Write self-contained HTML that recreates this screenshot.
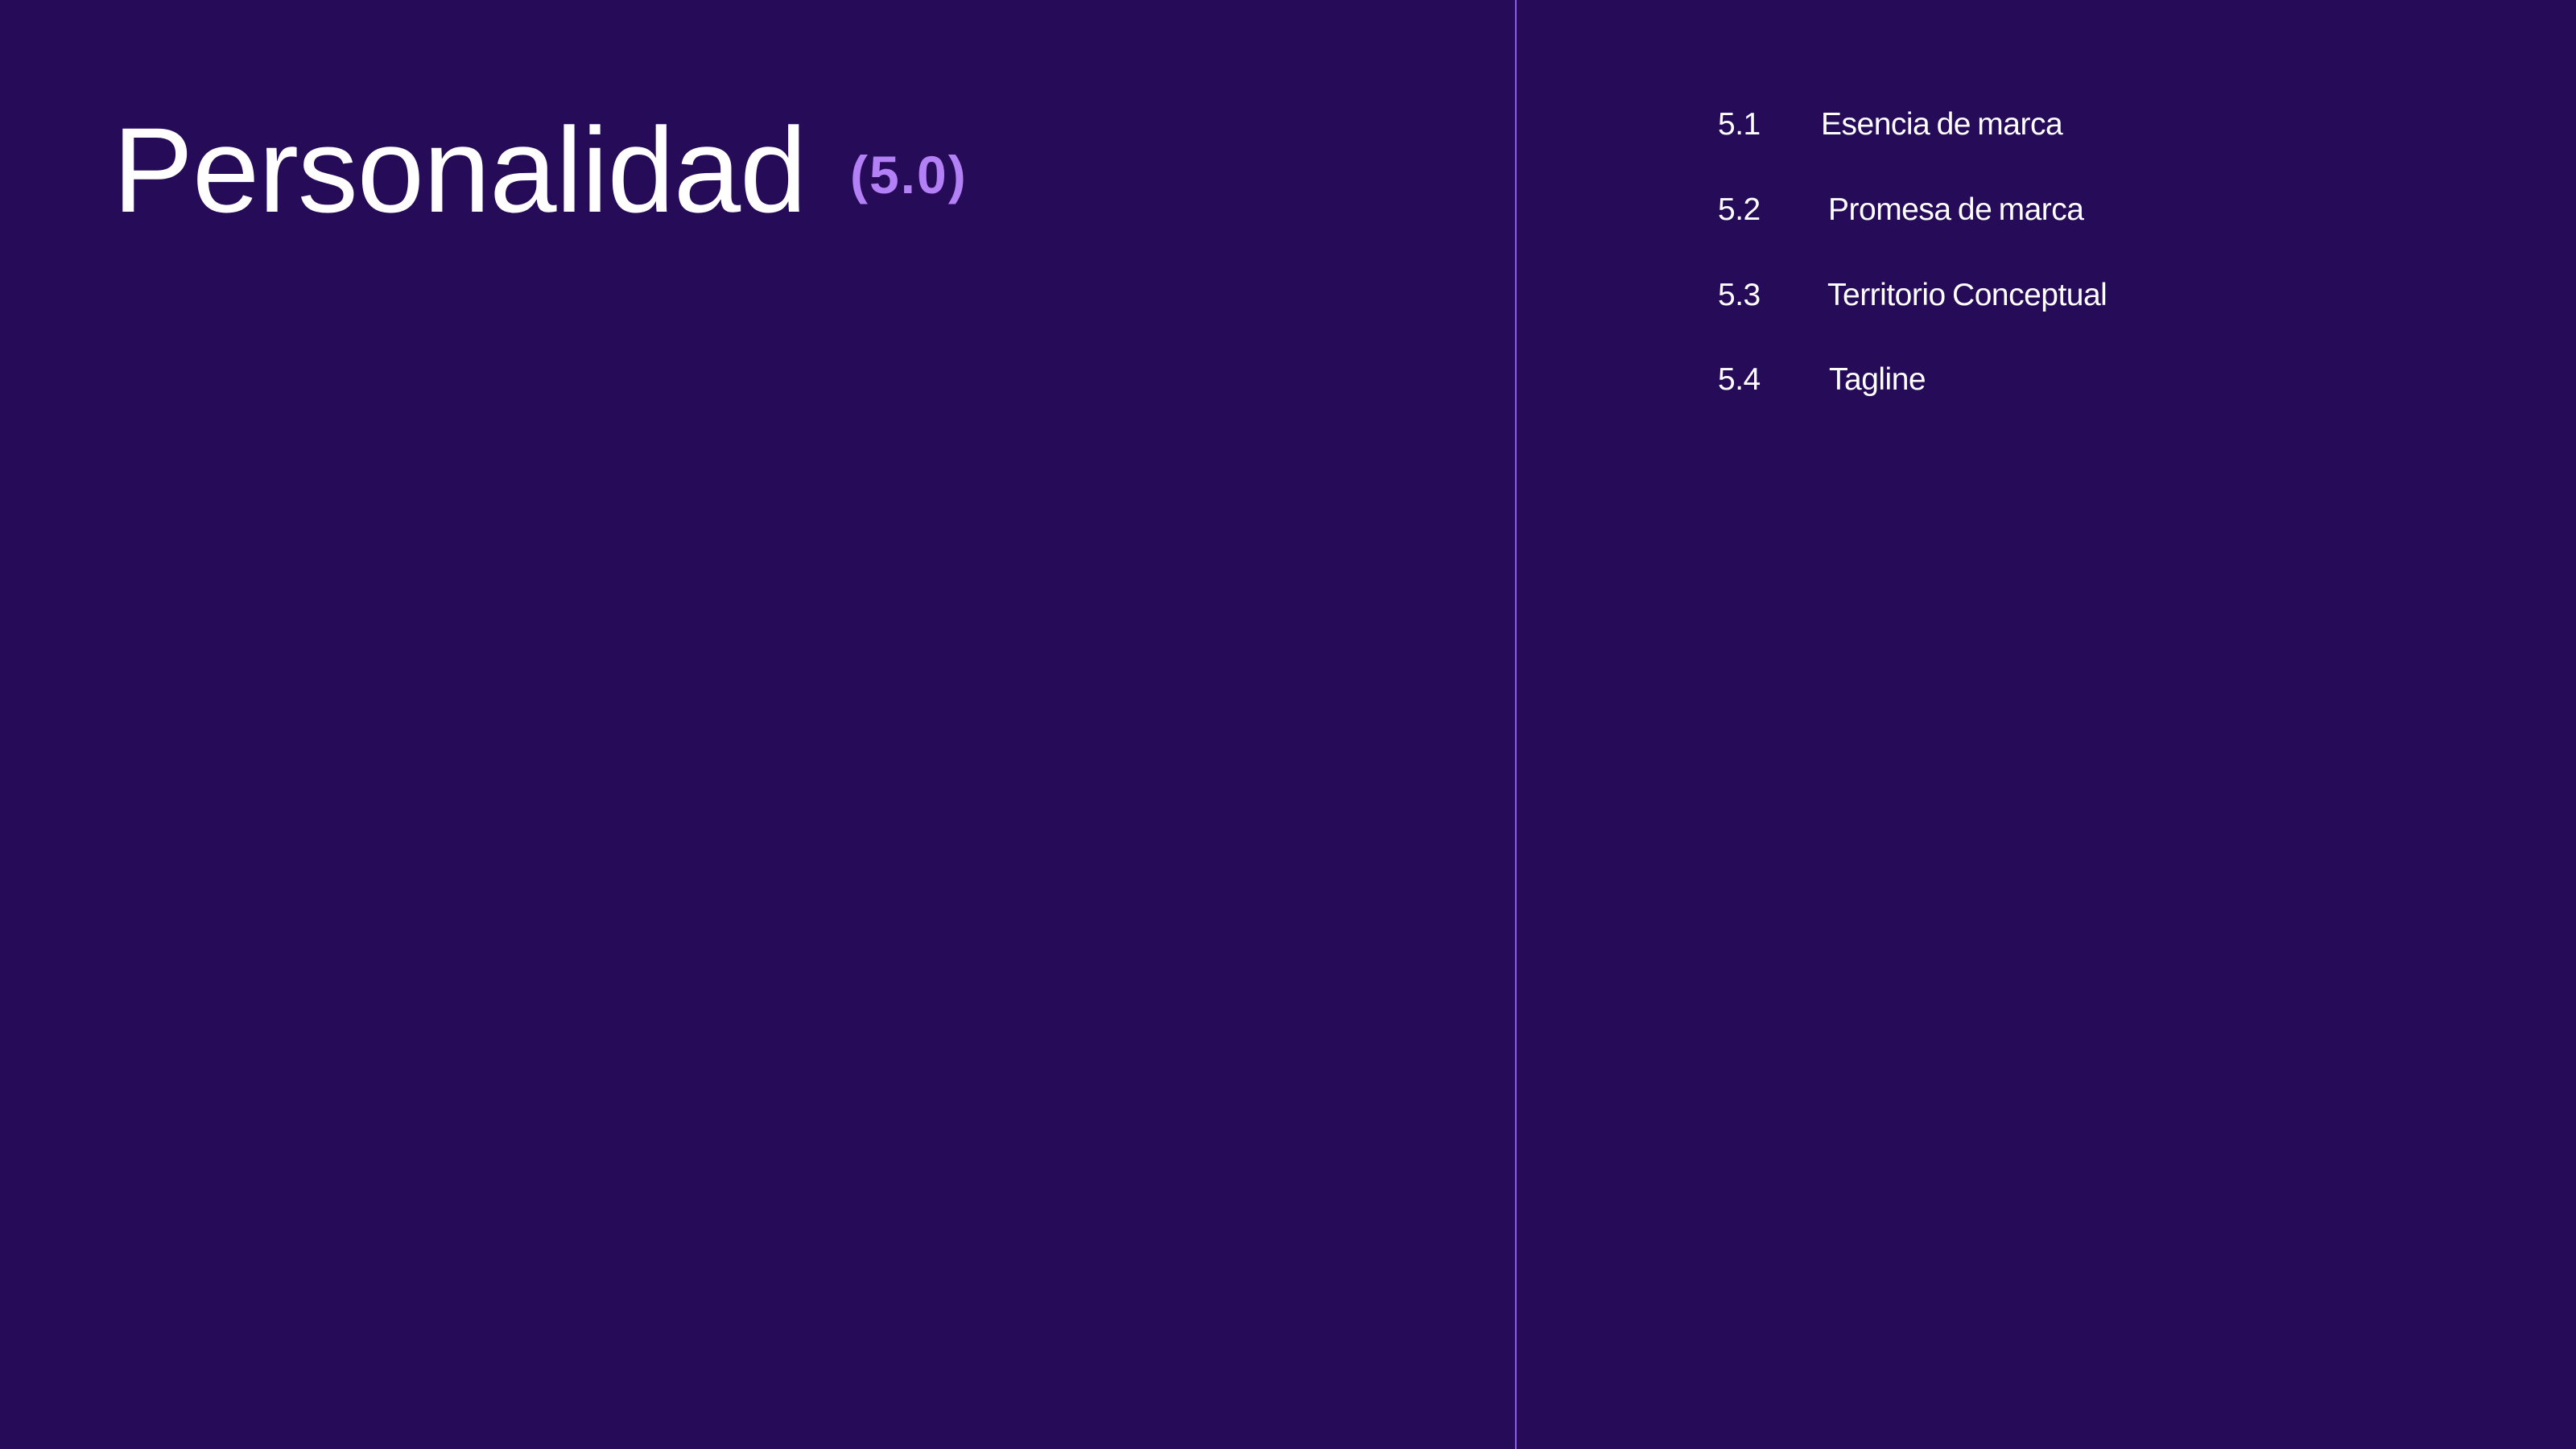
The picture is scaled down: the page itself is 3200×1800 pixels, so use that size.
<!DOCTYPE html>
<html><head><meta charset="utf-8"><style>
html,body{margin:0;padding:0}
body{width:3200px;height:1800px;background:#250b58;position:relative;overflow:hidden;font-family:"Liberation Sans",sans-serif;color:#fff}
.t{position:absolute;white-space:nowrap;line-height:1}
#title{left:140px;top:136px;font-size:150px;letter-spacing:-1.2px}
#num{left:1056px;top:184px;font-size:66px;color:#b480f5;letter-spacing:2px;font-weight:bold}
#line{position:absolute;left:1882px;top:0;width:2px;height:1800px;background:#8c5cf0}
.n{font-size:39px;left:2134px;letter-spacing:-0.5px}
.l{font-size:39px;letter-spacing:-0.5px;word-spacing:-2px}
</style></head><body>
<div class="t" id="title">Personalidad</div>
<div class="t" id="num">(5.0)</div>
<div id="line"></div>
<div class="t n" style="top:135px">5.1</div>
<div class="t l" style="top:135px;left:2262px">Esencia de marca</div>
<div class="t n" style="top:241px">5.2</div>
<div class="t l" style="top:241px;left:2271px">Promesa de marca</div>
<div class="t n" style="top:347px">5.3</div>
<div class="t l" style="top:347px;left:2270px">Territorio Conceptual</div>
<div class="t n" style="top:452px">5.4</div>
<div class="t l" style="top:452px;left:2272px">Tagline</div>
</body></html>
